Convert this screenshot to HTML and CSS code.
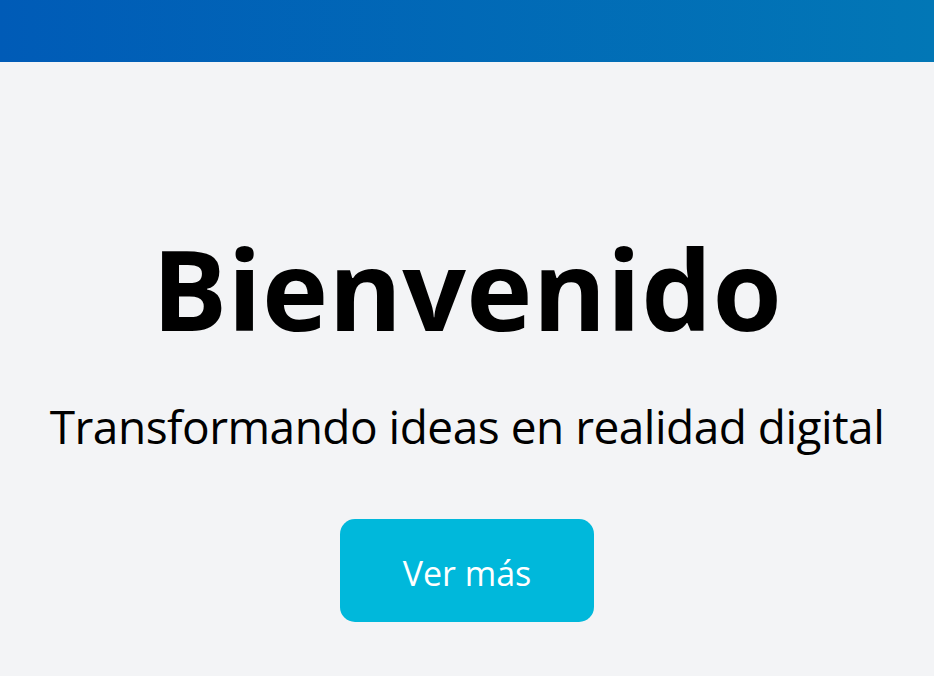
FILE: index.html
```html
<!DOCTYPE html>
<html lang="es">
<head>
<meta charset="utf-8">
<title>Bienvenido</title>
<link rel="stylesheet" href="styles.css">
</head>
<body>
<header class="topbar"></header>
<main class="hero">
  <h1 class="hero-title">Bienvenido</h1>
  <p class="hero-subtitle">Transformando ideas en realidad digital</p>
  <a class="hero-button" href="#">Ver más</a>
</main>
</body>
</html>
```
FILE: styles.css
```css
html, body {
  margin: 0;
  padding: 0;
}
body {
  background: #f3f4f6;
  font-family: "Open Sans", "Noto Sans", "DejaVu Sans", sans-serif;
  color: #000;
  width: 934px;
  height: 676px;
  overflow: hidden;
}
.topbar {
  height: 62px;
  background: linear-gradient(90deg, #005bb7 0%, #0277b6 100%);
}
.hero {
  display: flex;
  flex-direction: column;
  align-items: center;
  padding-top: 170px;
}
.hero-title {
  margin: 0;
  font-size: 112px;
  font-weight: 700;
  line-height: 1;
  letter-spacing: 0.3px;
}
.hero-subtitle {
  margin: 59px 0 0;
  font-size: 46px;
  line-height: 1;
  letter-spacing: -0.5px;
}
.hero-button {
  margin-top: 70px;
  display: flex;
  align-items: center;
  justify-content: center;
  width: 254px;
  height: 103px;
  box-sizing: border-box;
  padding-top: 4px;
  background: #00b8db;
  color: #fff;
  border-radius: 15px;
  text-decoration: none;
  font-size: 34px;
}
```
